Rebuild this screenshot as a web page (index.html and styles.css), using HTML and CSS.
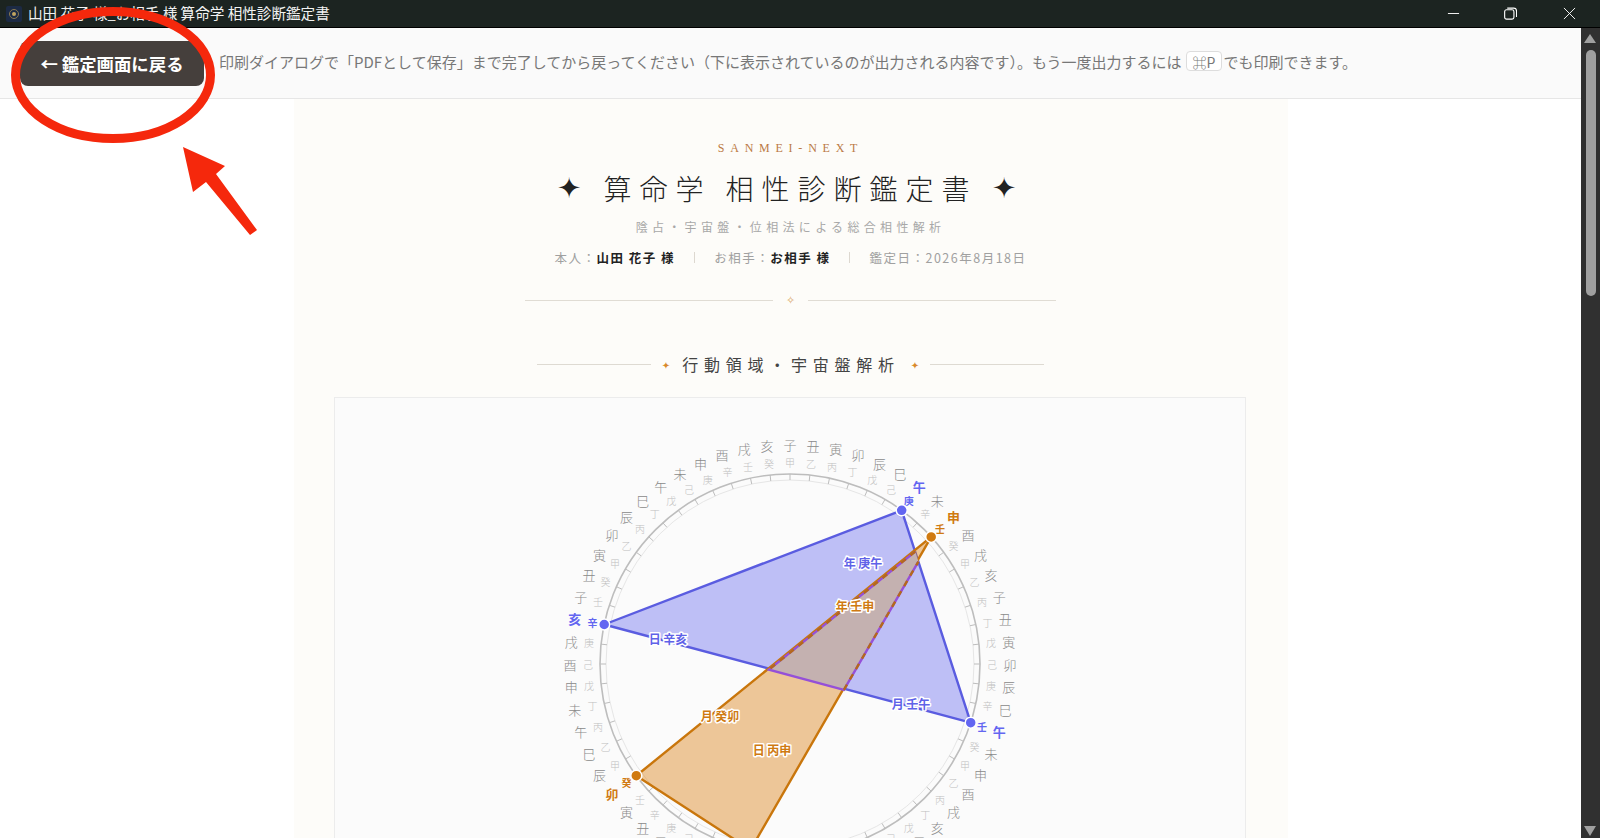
FILE: index.html
```html
<!DOCTYPE html>
<html lang="ja">
<head>
<meta charset="utf-8">
<title>算命学 相性診断鑑定書</title>
<link rel="stylesheet" href="styles.css">
</head>
<body>
<header class="titlebar">
  <svg class="app-icon" viewBox="0 0 16 16"><rect width="16" height="16" rx="2" fill="#1c2a44"/><circle cx="8" cy="8" r="4.5" fill="none" stroke="#8a7a50" stroke-width="1"/><circle cx="8" cy="8" r="2" fill="#c2a560"/></svg>
  <span class="title-text">山田 花子 様_お相手 様 算命学 相性診断鑑定書</span>
  <div class="win-controls">
    <svg class="win-btn win-min" viewBox="0 0 14 14"><path d="M1 7h12" stroke="#fff" stroke-width="1" fill="none"/></svg>
    <svg class="win-btn win-max" viewBox="0 0 14 14"><rect x="0.7" y="3" width="10" height="10" rx="2" stroke="#fff" stroke-width="1.2" fill="none"/><path d="M3.5 1.2h7a3 3 0 0 1 3 3v6.5" stroke="#fff" stroke-width="1.2" fill="none"/></svg>
    <svg class="win-btn win-close" viewBox="0 0 14 14"><path d="M1 1l12 12M13 1L1 13" stroke="#fff" stroke-width="1" fill="none"/></svg>
  </div>
</header>
<div class="window">
  <div class="content">
    <div class="toolbar">
      <button class="back-btn">← 鑑定画面に戻る</button>
      <p class="hint">印刷ダイアログで「PDFとして保存」まで完了してから戻ってください（下に表示されているのが出力される内容です）。もう一度出力するには<kbd class="key">⌘P</kbd>でも印刷できます。</p>
    </div>
    <main class="page">
      <article class="sheet">
        <p class="brand">SANMEI-NEXT</p>
        <h1 class="doc-title"><span class="star">✦</span><span class="doc-title-text">算命学 相性診断鑑定書</span><span class="star">✦</span></h1>
        <p class="subtitle">陰占・宇宙盤・位相法による総合相性解析</p>
        <p class="meta">
          <span>本人：<b>山田 花子 様</b></span><i class="sep"></i>
          <span>お相手：<b>お相手 様</b></span><i class="sep"></i>
          <span>鑑定日：2026年8月18日</span>
        </p>
        <div class="rule"><span class="rule-mark">✧</span></div>
        <h2 class="section-head"><span class="section-star">✦</span><span class="section-text">行動領域・宇宙盤解析</span><span class="section-star">✦</span></h2>
        <section class="chart-card">
          <svg id="wheel" class="wheel" viewBox="0 0 500 500" width="500" height="500">
            <g id="ring"></g>
            <polygon class="tri-blue" points="361.7,96.3 430.7,308.7 64.2,210.5"/>
            <polygon class="tri-orange" points="391.2,122.9 96.3,361.7 210.5,435.8"/>
            <polygon class="overlap-fill" points="375.2,137.6 229,255.6 303.9,275.8 378.4,147.6"/>
            <path class="overlap-line" d="M375.2 137.6L229 255.6L303.9 275.8L378.4 147.6"/>
            <path class="overlap-dash" d="M375.2 137.6L229 255.6M303.9 275.8L378.4 147.6"/>
            <g id="labels"></g>
            <circle class="dot-blue" cx="361.7" cy="96.3" r="5.5"/>
            <circle class="dot-blue" cx="430.7" cy="308.7" r="5.5"/>
            <circle class="dot-blue" cx="64.2" cy="210.5" r="5.5"/>
            <circle class="dot-orange" cx="391.2" cy="122.9" r="5.5"/>
            <circle class="dot-orange" cx="96.3" cy="361.7" r="5.5"/>
            <text class="pillar pillar-blue" x="323" y="148">年 庚午</text>
            <text class="pillar pillar-orange" x="315" y="191">年 壬申</text>
            <text class="pillar pillar-blue" x="128" y="224">日 辛亥</text>
            <text class="pillar pillar-blue" x="371" y="289">月 壬午</text>
            <text class="pillar pillar-orange" x="180" y="301">月 癸卯</text>
            <text class="pillar pillar-orange" x="232" y="335">日 丙申</text>
          </svg>
        </section>
      </article>
    </main>
  </div>
  <aside class="scrollbar">
    <span class="arrow-up"></span>
    <span class="thumb"></span>
    <span class="arrow-down"></span>
  </aside>
</div>
<svg class="annotation" viewBox="0 0 1600 838" width="1600" height="838">
  <ellipse cx="113" cy="75" rx="97.5" ry="63.5" fill="none" stroke="#f5280c" stroke-width="9"/>
  <polygon points="183,147 225,166 216,174 257,230 250,235 206,182 193,192" fill="#f5280c"/>
</svg>
<script src="script.js"></script>
</body>
</html>
```
FILE: styles.css
```css
* { box-sizing: border-box; }
html, body { margin: 0; height: 100%; overflow: hidden; }
body { display: flex; flex-direction: column; background: #fff; font-family: "Noto Sans CJK JP", "Noto Sans", sans-serif; }

.titlebar { flex: 0 0 28px; display: flex; align-items: center; background: #1c2421; border-bottom: 1px solid #000; color: #f2f2f2; padding-left: 6px; }
.app-icon { width: 16px; height: 16px; }
.title-text { margin-left: 6px; font-size: 14.6px; line-height: 1; }
.win-controls { margin-left: auto; display: flex; align-items: center; padding-right: 24px; }
.win-btn { width: 13px; height: 13px; }
.win-max { margin-left: 44px; }
.win-close { margin-left: 46px; }

.window { flex: 1; display: flex; min-height: 0; }
.content { flex: 1; display: flex; flex-direction: column; min-width: 0; }

.toolbar { flex: 0 0 71px; display: flex; align-items: center; gap: 15px; padding: 0 0 0 20px; background: #fafafa; border-bottom: 1px solid #e6e6e6; }
.back-btn { width: 184px; height: 45px; margin-top: 1px; border: 0; border-radius: 8px; background: #453f3c; color: #fff; font: 700 17.4px "Noto Sans CJK JP", sans-serif; padding: 0; }
.hint { margin: 0 0 3px; font-size: 15px; color: #777; white-space: nowrap; }
.key { display: inline-block; margin: 0 1px 0 4px; padding: 0 6px; height: 20px; line-height: 18px; border: 1px solid #ddd; border-radius: 4px; background: #fff; font: 14px "Noto Sans CJK JP", sans-serif; color: #777; }

.page { flex: 1; min-height: 0; overflow: hidden; }
.sheet { width: 994px; margin: 0 auto; min-height: 100%; padding: 37px 41px 0; background: #fdfcf9; color: #222; text-align: center; font-family: "Noto Sans CJK JP", serif; }

.brand { margin: 0; height: 24px; font: 12px/24px "Liberation Serif", serif; letter-spacing: 0.48em; color: #bb7a45; }
.doc-title { margin: 6px 0 0; height: 44px; padding-right: 8px; display: flex; justify-content: center; align-items: center; gap: 22px; font-size: 28px; font-weight: 300; color: #222; }
.doc-title-text { letter-spacing: 8px; margin-right: -8px; white-space: pre; }
.star { font-size: 29px; line-height: 44px; color: #222; font-family: "DejaVu Sans", sans-serif; }
.subtitle { margin: 7px 0 0; height: 20px; line-height: 20px; font-size: 12px; letter-spacing: 0.36em; color: #a8a8a8; }
.meta { margin: 10px 0 0; height: 20px; display: flex; justify-content: center; align-items: center; gap: 19px; font-size: 12.5px; letter-spacing: 0.12em; color: #a0a0a0; }
.meta b { color: #222; font-weight: 700; }
.sep { width: 1px; height: 11px; background: #ddd8d0; }

.rule { margin: 33px auto 0; width: 531px; height: 1px; background: #e0dcd4; display: flex; justify-content: center; align-items: center; }
.rule-mark { padding: 0 13px; background: #fdfcf9; font-size: 11px; line-height: 12px; color: #d9a25a; font-family: "DejaVu Sans", sans-serif; }

.section-head { margin: 43px auto 0; width: 507px; height: 40px; display: flex; align-items: center; gap: 11px; font-size: 16px; font-weight: 400; color: #444; }
.section-head::before, .section-head::after { content: ""; flex: 1; height: 1px; background: #dedad2; }
.section-star { margin-top: 3px; font-size: 10px; color: #d98a2b; font-family: "DejaVu Sans", sans-serif; }
.section-text { letter-spacing: 0.36em; margin: 0 0 0 1px; white-space: nowrap; }

.chart-card { margin: 13px 1px 0 -1px; height: 700px; padding-top: 16px; background: #fbfbfb; border: 1px solid #ececec; }
.wheel { display: block; margin: 0 auto; overflow: visible; }

.ring-outer { fill: none; stroke: #bdbdbd; stroke-width: 1.6; }
.ring-inner { fill: none; stroke: #e6e6e6; stroke-width: 1; }
.tick { stroke: #bdbdbd; stroke-width: 1; }
.branch, .stem { text-anchor: middle; dominant-baseline: central; }
.branch { font-size: 13px; font-weight: 300; fill: #8a8a8a; }
.stem { font-size: 10px; font-weight: 300; fill: #c0c0c0; }
.branch.hl-blue, .branch.hl-orange, .stem.hl-blue, .stem.hl-orange { font-weight: 700; }
.hl-blue { fill: #6366f1; }
.hl-orange { fill: #d07a10; }

.tri-blue { fill: rgba(99, 102, 241, 0.4); stroke: #5a5ce0; stroke-width: 2.4; stroke-linejoin: round; }
.tri-orange { fill: rgba(217, 119, 6, 0.4); stroke: #c9760c; stroke-width: 2.4; stroke-linejoin: round; }
.overlap-fill { fill: #c4b1b0; }
.overlap-line { fill: none; stroke: #9550d8; stroke-width: 2.4; }
.overlap-dash { fill: none; stroke: #b5691a; stroke-width: 2.4; stroke-dasharray: 6 6; }
.dot-blue { fill: #6366f1; stroke: #fff; stroke-width: 1.5; }
.dot-orange { fill: #d07a10; stroke: #fff; stroke-width: 1.5; }

.pillar { font-size: 12px; font-weight: 700; text-anchor: middle; dominant-baseline: central; paint-order: stroke; stroke: #fff; stroke-width: 3px; stroke-linejoin: round; }
.pillar-blue { fill: #5f62e8; }
.pillar-orange { fill: #cf7a12; }

.scrollbar { flex: 0 0 19px; position: relative; background: #303030; }
.thumb { position: absolute; left: 5px; right: 4px; top: 22px; height: 246px; border-radius: 6px; background: #a0a0a0; }
.arrow-up, .arrow-down { position: absolute; left: 3px; width: 0; height: 0; border-left: 6.5px solid transparent; border-right: 6.5px solid transparent; }
.arrow-up { top: 6px; border-bottom: 9px solid #a0a0a0; }
.arrow-down { bottom: 2px; border-top: 10px solid #a0a0a0; }

.annotation { position: absolute; left: 0; top: 0; pointer-events: none; }
```
FILE: script.js
```js
(function () {
  var NS = "http://www.w3.org/2000/svg";
  var stems = "甲乙丙丁戊己庚辛壬癸";
  var branches = "子丑寅卯辰巳午未申酉戌亥";
  var CX = 250, CY = 250;
  var highlight = { 6: "hl-blue", 18: "hl-blue", 47: "hl-blue", 8: "hl-orange", 39: "hl-orange", 32: "hl-orange" };
  var ring = document.getElementById("ring");
  var labels = document.getElementById("labels");

  function el(name, attrs, parent, text) {
    var node = document.createElementNS(NS, name);
    Object.keys(attrs).forEach(function (k) { node.setAttribute(k, attrs[k]); });
    if (text) node.textContent = text;
    parent.appendChild(node);
    return node;
  }
  function polar(r, deg) {
    var a = deg * Math.PI / 180;
    return [CX + r * Math.sin(a), CY - r * Math.cos(a)];
  }

  el("circle", { cx: CX, cy: CY, r: 190, "class": "ring-outer" }, ring);
  el("circle", { cx: CX, cy: CY, r: 184, "class": "ring-inner" }, ring);

  for (var i = 0; i < 60; i++) {
    var deg = i * 6;
    var p1 = polar(184, deg), p2 = polar(190, deg);
    el("line", { x1: p1[0], y1: p1[1], x2: p2[0], y2: p2[1], "class": "tick" }, ring);
    var hl = highlight[i] || "";
    var s = polar(202, deg), b = polar(220, deg);
    el("text", { x: s[0], y: s[1], "class": "stem " + hl }, labels, stems[i % 10]);
    el("text", { x: b[0], y: b[1], "class": "branch " + hl }, labels, branches[i % 12]);
  }
})();
```
